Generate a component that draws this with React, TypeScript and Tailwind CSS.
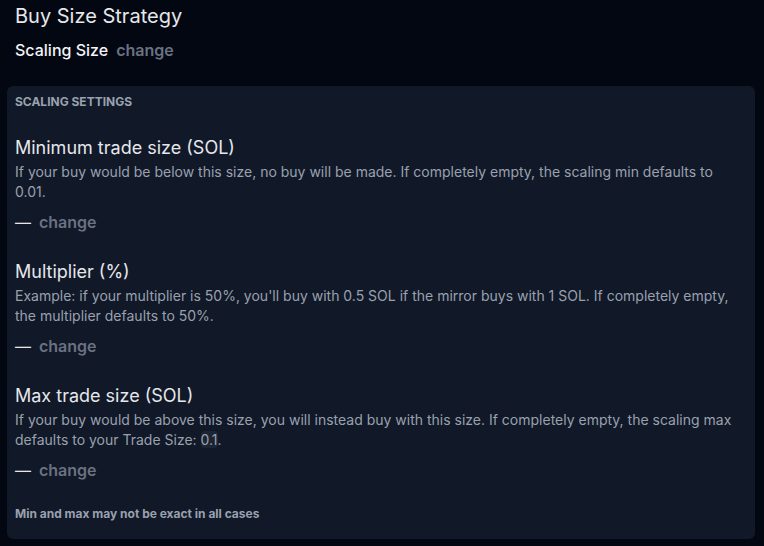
import React from 'react';

interface SettingProps {
  title: string;
  children: React.ReactNode;
}

const Setting: React.FC<SettingProps> = ({ title, children }) => (
  <div className="mt-6">
    <h3 className="text-lg leading-7 text-gray-200">{title}</h3>
    <p className="text-sm leading-5 text-gray-400">{children}</p>
    <div className="mt-2 flex items-center gap-2 text-base leading-6">
      <span className="text-gray-200">—</span>
      <button className="font-semibold text-gray-500">change</button>
    </div>
  </div>
);

export default function App() {
  return (
    <div
      className="min-h-[546px] bg-[#030712] pt-[2px] pb-2"
      style={{ fontFamily: 'Inter, "Noto Sans", sans-serif' }}
    >
      {/* Header */}
      <div className="px-[15px]">
        <h1 className="text-xl leading-7 text-gray-200">Buy Size Strategy</h1>
        <div className="mt-2 flex items-center gap-2 text-base leading-6">
          <span className="font-medium text-gray-100">Scaling Size</span>
          <button className="font-semibold text-gray-500">change</button>
        </div>
      </div>

      {/* Settings card */}
      <div className="ml-[7px] mr-[9px] mt-6 rounded-md bg-[#111827] px-2 pt-2 pb-[17px]">
        <h2 className="text-xs font-bold leading-4 text-gray-400">SCALING SETTINGS</h2>

        <Setting title="Minimum trade size (SOL)">
          If your buy would be below this size, no buy will be made. If completely empty, the scaling min defaults to 0.01.
        </Setting>

        <Setting title="Multiplier (%)">
          Example: if your multiplier is 50%, you'll buy with 0.5 SOL if the mirror buys with 1 SOL. If completely empty, the multiplier defaults to 50%.
        </Setting>

        <Setting title="Max trade size (SOL)">
          If your buy would be above this size, you will instead buy with this size. If completely empty, the scaling max defaults to your Trade Size:{' '}
          <span className="rounded-sm bg-white/5">0.1</span>.
        </Setting>

        <p className="mt-6 text-xs font-bold leading-4 text-gray-400">Min and max may not be exact in all cases</p>
      </div>
    </div>
  );
}
